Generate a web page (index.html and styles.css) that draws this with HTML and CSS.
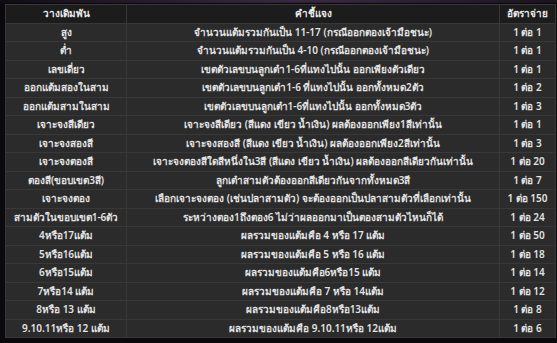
FILE: index.html
```html
<!DOCTYPE html>
<html lang="th">
<head>
<meta charset="utf-8">
<link rel="stylesheet" href="styles.css">
</head>
<body>
<div class="page">
<table class="rates">
<thead>
<tr><th class="c1">วางเดิมพัน</th><th class="c2">คำชี้แจง</th><th class="c3">อัตราจ่าย</th></tr>
</thead>
<tbody>
<tr><td>สูง</td><td>จำนวนแต้มรวมกันเป็น 11-17 (กรณีออกตองเจ้ามือชนะ)</td><td>1 ต่อ 1</td></tr>
<tr><td>ต่ำ</td><td>จำนวนแต้มรวมกันเป็น 4-10 (กรณีออกตองเจ้ามือชนะ)</td><td>1 ต่อ 1</td></tr>
<tr><td>เลขเดี่ยว</td><td>เขตตัวเลขบนลูกเต๋า1-6ที่แทงไปนั้น ออกเพียงตัวเดียว</td><td>1 ต่อ 1</td></tr>
<tr><td>ออกแต้มสองในสาม</td><td>เขตตัวเลขบนลูกเต๋า1-6 ที่แทงไปนั้น ออกทั้งหมด2ตัว</td><td>1 ต่อ 2</td></tr>
<tr><td>ออกแต้มสามในสาม</td><td>เขตตัวเลขบนลูกเต๋า1-6ที่แทงไปนั้น ออกทั้งหมด3ตัว</td><td>1 ต่อ 3</td></tr>
<tr><td>เจาะจงสีเดียว</td><td>เจาะจงสีเดียว (สีแดง เขียว น้ำเงิน) ผลต้องออกเพียง1สีเท่านั้น</td><td>1 ต่อ 1</td></tr>
<tr><td>เจาะจงสองสี</td><td>เจาะจงสองสี (สีแดง เขียว น้ำเงิน) ผลต้องออกเพียง2สีเท่านั้น</td><td>1 ต่อ 3</td></tr>
<tr><td>เจาะจงตองสี</td><td>เจาะจงตองสีใดสีหนึ่งใน3สี (สีแดง เขียว น้ำเงิน) ผลต้องออกสีเดียวกันเท่านั้น</td><td>1 ต่อ 20</td></tr>
<tr><td>ตองสี(ขอบเขต3สี)</td><td>ลูกเต๋าสามตัวต้องออกสีเดียวกันจากทั้งหมด3สี</td><td>1 ต่อ 7</td></tr>
<tr><td>เจาะจงตอง</td><td>เลือกเจาะจงตอง (เช่นปลาสามตัว) จะต้องออกเป็นปลาสามตัวที่เลือกเท่านั้น</td><td>1 ต่อ 150</td></tr>
<tr><td>สามตัวในขอบเขต1-6ตัว</td><td>ระหว่างตอง1ถึงตอง6 ไม่ว่าผลออกมาเป็นตองสามตัวไหนก็ได้</td><td>1 ต่อ 24</td></tr>
<tr><td>4หรือ17แต้ม</td><td>ผลรวมของแต้มคือ 4 หรือ 17 แต้ม</td><td>1 ต่อ 50</td></tr>
<tr><td>5หรือ16แต้ม</td><td>ผลรวมของแต้มคือ 5 หรือ 16 แต้ม</td><td>1 ต่อ 18</td></tr>
<tr><td>6หรือ15แต้ม</td><td>ผลรวมของแต้มคือ6หรือ15 แต้ม</td><td>1 ต่อ 14</td></tr>
<tr><td>7หรือ14 แต้ม</td><td>ผลรวมของแต้มคือ 7 หรือ 14แต้ม</td><td>1 ต่อ 12</td></tr>
<tr><td>8หรือ 13 แต้ม</td><td>ผลรวมของแต้มคือ8หรือ13แต้ม</td><td>1 ต่อ 8</td></tr>
<tr><td>9.10.11หรือ 12 แต้ม</td><td>ผลรวมของแต้มคือ 9.10.11หรือ 12แต้ม</td><td>1 ต่อ 6</td></tr>
</tbody>
</table>
</div>
</body>
</html>
```
FILE: styles.css
```css
html, body {
  margin: 0;
  padding: 0;
  width: 557px;
  height: 343px;
  overflow: hidden;
}
body {
  background:
    radial-gradient(ellipse 60% 10px at 55% 0, #3b2a42 0%, #1d1522 70%, rgba(11, 9, 13, 0) 100%),
    #0b090d;
  font-family: "Noto Sans", "DejaVu Sans", sans-serif;
}
.page {
  padding: 4px 5px 0 5px;
}
.rates {
  width: 547px;
  border-collapse: collapse;
  table-layout: fixed;
  outline: 1px solid #0a0a0a;
}
.rates .c1 { width: 120px; }
.rates .c2 { width: 372px; }
.rates .c3 { width: 55px; }
.rates th,
.rates td {
  height: 17.5px;
  padding: 0;
  text-align: center;
  font-size: 10px;
  line-height: 17.5px;
  white-space: nowrap;
  overflow: hidden;
  color: #e2e2e2;
  border: 1px solid #383838;
}
.rates th {
  background: #1c1c1c;
  font-weight: 700;
  color: #eaeaea;
}
.rates td {
  background: #2b2b2b;
  font-weight: 600;
}
```
